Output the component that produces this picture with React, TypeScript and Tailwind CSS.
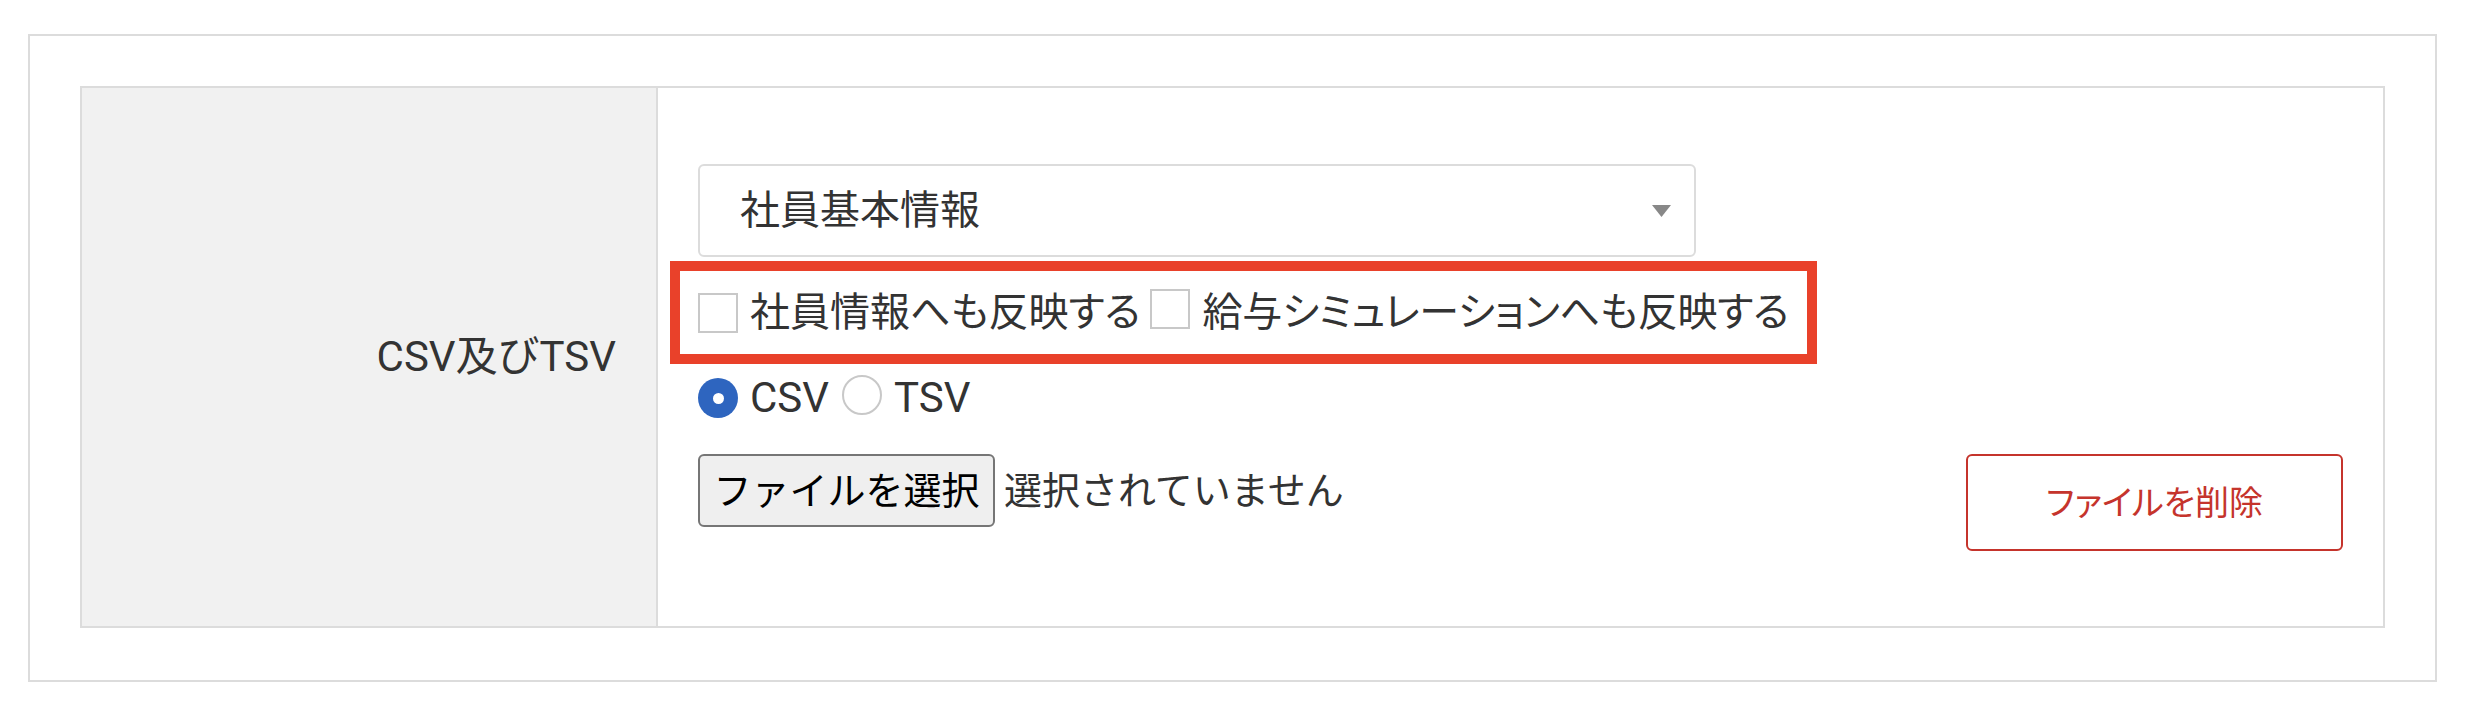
import React from "react";

const font = { fontFamily: 'Roboto, "Noto Sans CJK JP", sans-serif' };

function Checkbox() {
  return <span className="inline-block w-[40px] h-[40px] border-2 border-[#c8c8c8] bg-white shrink-0" />;
}

function Radio({ checked }: { checked?: boolean }) {
  if (checked) {
    return (
      <span className="inline-flex w-[40px] h-[40px] rounded-full bg-[#2e65bf] items-center justify-center shrink-0">
        <span className="block w-[11px] h-[11px] rounded-full bg-white" />
      </span>
    );
  }
  return <span className="inline-block w-[40px] h-[40px] rounded-full border-2 border-[#c8c8c8] bg-white shrink-0" />;
}

export default function App() {
  return (
    <div className="w-[2472px] h-[710px] bg-white pt-[34px] pl-[28px] text-[#333333]" style={font}>
      <div className="w-[2409px] h-[648px] border-2 border-[#dcdcdc] p-[50px]">
        <div className="flex border-2 border-[#dcdcdc]">
          <div className="w-[576px] shrink-0 bg-[#f1f1f1] border-r-2 border-[#dcdcdc] flex items-center justify-end pr-[40px]">
            <span className="text-[42px] leading-none">CSV及びTSV</span>
          </div>
          <div className="flex-1 px-[40px] pt-[76px] pb-[75px] flex flex-col">
            <div className="w-[998px] h-[93px] border-2 border-[#dcdcdc] rounded-[6px] flex items-center justify-between pl-[40px] pr-[23px]">
              <span className="text-[40px] leading-none">社員基本情報</span>
              <svg width="19" height="12" viewBox="0 0 19 12">
                <polygon points="0,0 19,0 9.5,12" fill="#888888" />
              </svg>
            </div>
            <div className="mt-[4px] ml-[-28px] w-[1147px] h-[103px] border-[10px] border-[#e9412a] flex items-center pl-[18px]">
              <Checkbox />
              <span className="ml-[12px] text-[40px] leading-none" style={{ fontFeatureSettings: '"palt"' }}>社員情報へも反映する</span>
              <span className="ml-[10px]"><Checkbox /></span>
              <span className="ml-[12px] text-[40px] leading-none tracking-[-0.2px]" style={{ fontFeatureSettings: '"palt"' }}>給与シミュレーションへも反映する</span>
            </div>
            <div className="mt-[4px] h-[60px] flex items-center">
              <Radio checked />
              <span className="ml-[12px] text-[42px] leading-none">CSV</span>
              <span className="ml-[13px]"><Radio /></span>
              <span className="ml-[12px] text-[42px] leading-none">TSV</span>
            </div>
            <div className="mt-[26px] flex items-start justify-between">
              <div className="flex items-center">
                <button className="w-[297px] h-[73px] border-2 border-[#767676] rounded-[6px] bg-[#efefef] text-black text-[38px] leading-none flex items-center justify-center">
                  ファイルを選択
                </button>
                <span className="ml-[9px] text-[38px] leading-none">選択されていません</span>
              </div>
              <button className="w-[377px] h-[97px] border-2 border-[#c5342c] rounded-[6px] bg-white text-[#c5342c] text-[34px] leading-none flex items-center justify-center" style={{ fontFeatureSettings: '"palt"' }}>
                ファイルを削除
              </button>
            </div>
          </div>
        </div>
      </div>
    </div>
  );
}
